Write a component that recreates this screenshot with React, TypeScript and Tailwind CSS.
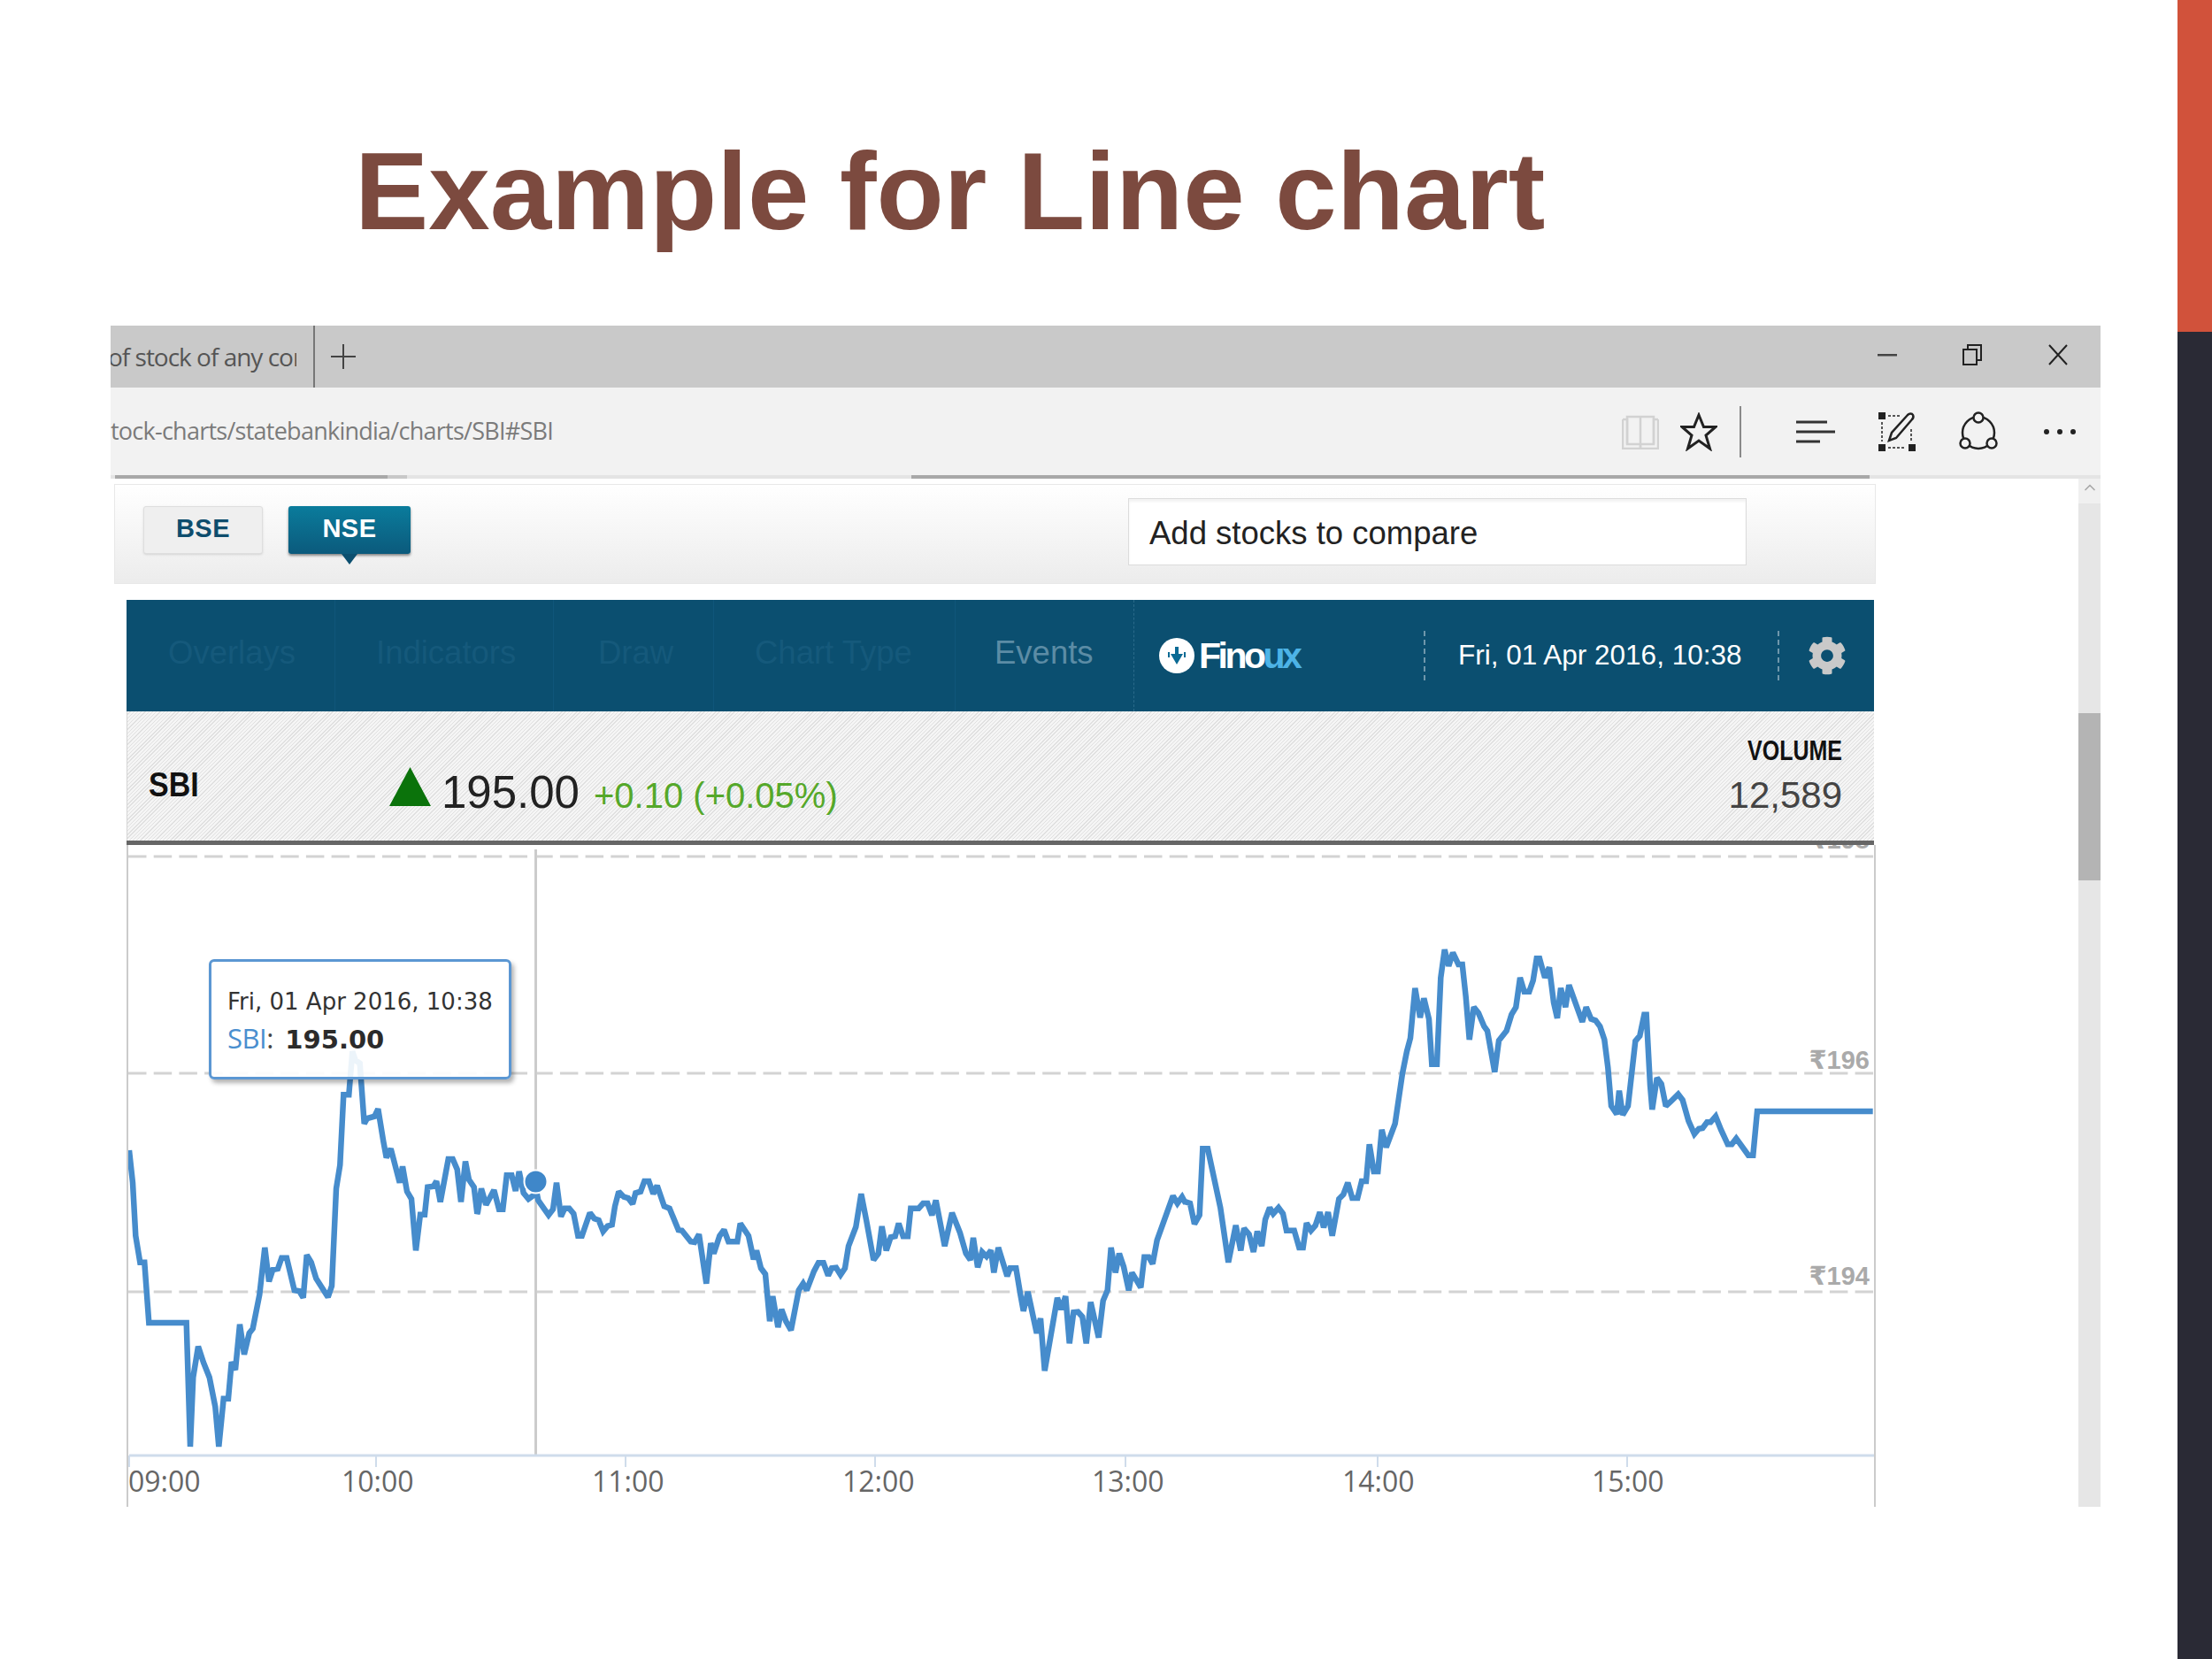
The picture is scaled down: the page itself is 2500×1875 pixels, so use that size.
import React from "react";
import { FaCog } from "react-icons/fa";
import { ChevronUp } from "lucide-react";

// price line, traced in 3x crops: [originX, originY, x, y, x, y ...]
const traced: number[][] = [
  [140, 1120, 18,540,30,650,40,830,55,920,70,920,85,1125,212,1125,225,1545,235,1310,252,1205,270,1260,290,1310,310,1410,322,1545,338,1382,354,1382,365,1258,378,1285,393,1130,408,1232,425,1160,437,1145,460,1030,478,870,492,985,505,945,522,942,535,905,552,905,578,1015,595,1018,608,1040,620,895,635,920,652,975,692,1038,705,1000,720,670,733,590,745,352,763,352,775,205,785,235,800,245,815,450,825,432,850,425,862,400,880,510,890,565,905,535,935,650,945,595,960,680,975,705,990,880,1005,758,1020,758,1030,665,1050,662,1060,645,1073,715,1100,570,1115,570,1130,605,1143,715,1158,578,1170,640,1187,665,1198,755],
  [540, 1200, 0,510,12,430,28,485,55,435,72,500,85,500,98,385,115,385,128,438,140,372,155,445,172,465,200,445,205,470,240,520,255,500,267,410,282,525,295,497,310,497,325,515,340,590,353,590,380,512,395,532,410,537,425,575,440,557,455,553,465,490,478,440,495,458,510,462,525,482,535,445,552,440,565,405,580,405,595,448,608,420,632,490,650,497,680,570,692,572,722,610,735,612,750,585,775,752,790,615,800,650,820,590,835,570,850,610,880,610,890,548,918,590,935,670,945,640,960,700,975,720,990,880,1000,795,1018,900,1030,840,1045,880,1062,910,1088,775,1103,752,1115,775,1140,710,1155,682,1172,682,1188,725,1200,700],
  [940, 1200, 0,700,15,698,30,722,45,700,57,625,82,560,100,448,118,540,142,672,158,650,170,558,185,640,200,595,215,592,227,548,242,592,258,592,268,497,295,497,310,480,325,480,340,520,353,470,383,625,408,512,435,580,455,650,470,672,480,597,495,697,510,645,525,660,540,640,550,715,565,630,595,727,605,700,625,700,640,790,650,845,665,780,695,920,708,870,722,1048,765,800,778,840,793,795,806,955,820,850,835,848,850,865,863,955,878,815,905,935,920,810,935,775,947,630,962,715,975,650,990,695,1007,775,1018,715,1048,765,1060,662,1075,662,1088,685,1103,605,1130,530,1157,455,1172,480,1188,458,1200,480],
  [1340, 1050, 0,925,15,930,30,1000,47,970,58,745,75,745,118,945,145,1130,170,1005,187,1090,198,1015,215,1035,230,1095,243,1025,258,1075,270,985,285,945,297,965,315,945,330,965,342,1022,368,1022,385,1080,398,1080,410,997,425,1022,440,1005,455,960,468,1012,483,960,497,1040,520,915,535,900,550,860,565,912,583,912,597,855,612,855,623,730,638,822,652,822,665,680,680,740,710,660,735,490,750,415,762,370,778,200,795,300,808,235,825,305,835,458,852,458,865,165,878,70,892,125,906,80,925,120,938,120,950,230,962,375,977,265,993,285,1012,330,1023,345,1048,485,1062,378,1088,345,1105,290,1120,265,1134,165,1148,212,1165,212,1178,175,1190,100,1200,100],
  [1740, 1050, 18,165,33,130,48,250,60,302,72,200,88,265,100,190,145,315,158,265,175,305,190,310,205,330,220,375,232,470,243,600,262,628,270,548,282,630,300,600,325,380,340,362,355,290,362,290,375,530,382,612,398,505,413,525,428,600,445,585,470,560,485,580,505,650,525,695,540,677,553,675,568,655,580,655,597,635,615,680,638,730,652,730,667,710,708,767,724,767,738,618,1130,618],
];

function linePoints() {
  const out: string[] = [];
  for (const seg of traced) {
    for (let i = 2; i < seg.length; i += 2) {
      out.push(`${(seg[0] + seg[i] / 3).toFixed(1)},${(seg[1] + seg[i + 1] / 3).toFixed(1)}`);
    }
  }
  return out.join(" ");
}

const gridY = [968, 1213, 1460];
const ticks = [146, 425, 707, 989, 1272, 1557, 1839];
const timeLabels: [string, number][] = [
  ["09:00", 145], ["10:00", 386], ["11:00", 669], ["12:00", 952],
  ["13:00", 1234], ["14:00", 1517], ["15:00", 1799],
];
const priceLabels: [string, number][] = [["₹198", 959], ["₹196", 1208], ["₹194", 1452]];

function LineChart() {
  return (
    <svg className="absolute inset-0" width="1977" height="748" viewBox="143 955 1977 748">
      {gridY.map((y) => (
        <line key={y} x1="145" x2="2118" y1={y} y2={y} stroke="#d3d3d3" strokeWidth="3" strokeDasharray="20.5 8.2" />
      ))}
      <line x1="605.5" x2="605.5" y1="960" y2="1645" stroke="#cccccc" strokeWidth="3" />
      <line x1="146" x2="2118" y1="1645" y2="1645" stroke="#cfdceb" strokeWidth="3" />
      {ticks.map((x) => (
        <line key={x} x1={x} x2={x} y1="1645" y2="1658" stroke="#cfdceb" strokeWidth="2" />
      ))}
      <polyline points={linePoints()} fill="none" stroke="#468ccc" strokeWidth="6.500" strokeLinejoin="miter" strokeMiterlimit="2" />
      <circle cx="605.5" cy="1335.500" r="13" fill="#3f87c9" stroke="#ffffff" strokeWidth="2" />
      {timeLabels.map(([t, x]) => (
        <text key={t} x={x} y="1686" fontSize="32" fill="#666666" className="font-['Open_Sans',sans-serif]">{t}</text>
      ))}
      {priceLabels.map(([t, y]) => (
        <text key={t} x="2113" y={y} textAnchor="end" fontSize="29" fontWeight="700" fill="#aaaaaa" className="font-['Liberation_Sans','DejaVu_Sans',sans-serif]">{t}</text>
      ))}
    </svg>
  );
}

function WindowControls() {
  return (
    <div className="flex h-full items-center pb-[4px]">
      <div className="flex w-[96px] justify-center">
        <svg width="22" height="4"><rect width="22" height="2.5" y="1" fill="#444" /></svg>
      </div>
      <div className="flex w-[96px] justify-center">
        <svg width="22" height="24" fill="none" stroke="#222" strokeWidth="2">
          <rect x="1" y="6" width="15" height="17" />
          <path d="M6 6V1h15v17h-5" />
        </svg>
      </div>
      <div className="flex w-[97px] justify-center">
        <svg width="22" height="24" fill="none" stroke="#222" strokeWidth="2">
          <path d="M1 1l20 22M21 1L1 23" />
        </svg>
      </div>
    </div>
  );
}

function Toolbar() {
  return (
    <div className="flex items-center">
      <div className="flex w-[66px] justify-center">
        <svg width="42" height="40" fill="none" stroke="#d2d2d2" strokeWidth="2.5">
          <path d="M1 6h5v28h15l0 4M41 6h-5v28H21" />
          <path d="M6 34V3h15v35M36 34V3H21" />
          <path d="M1 6v33h40V6" />
        </svg>
      </div>
      <div className="flex w-[66px] justify-center">
        <svg width="42" height="44" viewBox="0 0 42 44" fill="none" stroke="#222" strokeWidth="3">
          <path d="M21 3l5.5 13.5H40L29 26l4.5 15L21 32 8.500 41 13 26 2 16.500h13.500z" />
        </svg>
      </div>
      <div className="flex w-[28px] justify-center">
        <div className="h-[58px] w-[2px] bg-[#8a8a8a]" />
      </div>
      <div className="ml-[25px] flex w-[92px] justify-center">
        <svg width="44" height="28" fill="none" stroke="#333" strokeWidth="3">
          <path d="M0 3h35M0 14h44M0 25h27" />
        </svg>
      </div>
      <div className="flex w-[92px] justify-center">
        <svg width="42" height="44" viewBox="0 0 42 44">
          <g fill="#222">
            <rect x="0" y="0" width="8" height="8" />
            <rect x="0" y="36" width="8" height="8" />
            <rect x="34" y="36" width="8" height="8" />
          </g>
          <path d="M11 4h13M4 11v22M11 40h20M37 19v14" fill="none" stroke="#555" strokeWidth="2" strokeDasharray="3 2" />
          <path d="M12 32l3-9L33 3c2-2 5-2 6 0s1 3-1 5L20 29z" fill="none" stroke="#222" strokeWidth="2.500" />
        </svg>
      </div>
      <div className="flex w-[92px] justify-center">
        <svg width="44" height="46" fill="none" stroke="#222" strokeWidth="2.500">
          <circle cx="22" cy="24" r="18" />
          <circle cx="22" cy="7" r="5.500" fill="#f2f2f2" />
          <circle cx="7" cy="36" r="5.500" fill="#f2f2f2" />
          <circle cx="37" cy="36" r="5.500" fill="#f2f2f2" />
        </svg>
      </div>
      <div className="flex w-[92px] justify-center">
        <svg width="38" height="8" fill="#222">
          <circle cx="4" cy="4" r="3" />
          <circle cx="19" cy="4" r="3" />
          <circle cx="34" cy="4" r="3" />
        </svg>
      </div>
    </div>
  );
}

function StockHeader() {
  return (
    <div className="flex h-[126px] w-[1975px] bg-[#0b4f70] text-[36.500px] leading-none text-[#15597b]">
      <div className="flex w-[236px] items-center border-r border-[#10567a] pb-[6px] pl-[47px]">Overlays</div>
      <div className="flex w-[247px] items-center border-r border-[#10567a] pb-[6px] pl-[46px]">Indicators</div>
      <div className="flex w-[181px] items-center border-r border-[#10567a] pb-[6px] pl-[50px]">Draw</div>
      <div className="flex w-[273px] items-center border-r border-[#10567a] pb-[6px] pl-[46px]">Chart Type</div>
      <div className="flex w-[202px] items-center border-r border-dashed border-[#2a6a8a] pb-[6px] pl-[44px] text-[#5c8ca5]">Events</div>
      <div className="flex w-[327px] items-center pl-[28px]">
        <div className="flex size-[40px] items-center justify-center rounded-full bg-white">
          <svg width="22" height="24" fill="#0b6a94">
            <path d="M9 2h4v8h5l-7 12-7-12h5z" />
            <path d="M1 8h2v6H1zM19 8h2v6h-2z" />
          </svg>
        </div>
        <span className="ml-[5px] text-[41px] font-bold tracking-[-3.500px] text-white">
          Fino<span className="text-[#4db3e6]">ux</span>
        </span>
      </div>
      <div className="flex h-[56px] w-[400px] items-center self-center border-l-2 border-dashed border-[#6f97ab] pl-[37px] text-[31.500px] text-white">
        Fri, 01 Apr 2016, 10:38
      </div>
      <div className="flex h-[56px] flex-1 items-center self-center border-l-2 border-dashed border-[#6f97ab] pl-[32px]">
        <FaCog className="size-[44px] text-[#c9c9c9]" />
      </div>
    </div>
  );
}

function QuoteRow() {
  return (
    <div className="flex h-[146px] w-[1975px] border-l border-[#d5d5d5] bg-[repeating-linear-gradient(135deg,#f5f5f5_0,#f5f5f5_2px,#e0e0e0_2px,#e0e0e0_3px)] pl-[24px] pr-[36px] leading-none">
      <div className="mt-[64px] w-[272px] origin-top scale-y-[1.12] text-[34px] font-bold text-[#111]">SBI</div>
      <svg className="mt-[63px]" width="47" height="44">
        <polygon points="23.500,0 47,44 0,44" fill="#0b730b" />
      </svg>
      <div className="ml-[12px] mt-[66px] text-[51px] text-[#222]">195.00</div>
      <div className="ml-[16px] mt-[75px] text-[40px] text-[#55a82a]">+0.10 (+0.05%)</div>
      <div className="ml-auto mt-[29px] flex flex-col items-end">
        <div className="origin-top scale-y-[1.25] text-[25px] font-bold text-[#111]">VOLUME</div>
        <div className="mt-[20px] text-[42px] text-[#444]">12,589</div>
      </div>
    </div>
  );
}

export default function App() {
  return (
    <div className="flex h-[1875px] w-[2500px] overflow-hidden bg-white font-['Liberation_Sans',Arial,sans-serif]">
      <div className="flex-1">
        <div className="h-[368px] pl-[401px] pt-[154px] text-[124.800px] font-bold leading-none text-[#7c4a3f]">
          Example for Line chart
        </div>

        <div className="ml-[125px] flex h-[1335px] w-[2249px] flex-col overflow-hidden">
          {/* browser tab strip */}
          <div className="flex h-[70px] shrink-0 items-center bg-[#c9c9c9]">
            <div className="flex h-full w-[231px] items-center overflow-hidden border-r-2 border-[#777] pr-[19px]">
              <div className="w-full overflow-hidden whitespace-nowrap font-['Open_Sans',sans-serif] text-[28px] tracking-[-1px] text-[#555]">
                <span className="-ml-[3px] inline-block">of stock of any company</span>
              </div>
            </div>
            <svg className="ml-[18px]" width="28" height="28" stroke="#444" strokeWidth="2">
              <path d="M14 0v28M0 14h28" />
            </svg>
            <div className="ml-auto h-full">
              <WindowControls />
            </div>
          </div>

          {/* address bar */}
          <div className="flex h-[99px] shrink-0 items-center justify-between bg-[#f2f2f2]">
            <div className="font-['Open_Sans',sans-serif] text-[27px] tracking-[-0.750px] text-[#7b7b7b]">
              tock-charts/statebankindia/charts/SBI#SBI
            </div>
            <Toolbar />
          </div>

          <div className="flex h-[4px] shrink-0 bg-[#e4e4e4]">
            <div className="ml-[5px] w-[308px] bg-[#a8a8a8]" />
            <div className="w-[22px] bg-[#c8c8c8]" />
            <div className="ml-[570px] w-[1083px] bg-[#a8a8a8]" />
          </div>

          <div className="flex flex-1">
            <div className="w-[2224px] pl-[4px] pt-[6px]">
              <div className="flex h-[113px] w-[1991px] border border-[#e8e8e8] bg-gradient-to-b from-white to-[#ececec]">
                <div className="ml-[32px] mt-[24px] flex h-[54px] w-[135px] items-center justify-center rounded-[3px] border border-[#dedede] bg-[#efefef] pb-[2px] text-[29px] font-bold tracking-[0.5px] text-[#0e4d6d] shadow-sm">
                  BSE
                </div>
                <div className="relative ml-[29px] mt-[24px] flex h-[54px] w-[138px] items-center justify-center rounded-[3px] bg-gradient-to-b from-[#0a7c9c] to-[#0b5a7c] pb-[2px] text-[29px] font-bold tracking-[0.5px] text-white shadow-[0_2px_3px_rgba(0,0,0,0.45)]">
                  NSE
                  <div className="absolute -bottom-[12px] left-1/2 h-0 w-0 -translate-x-1/2 border-x-[9px] border-t-[12px] border-x-transparent border-t-[#0b4f6f]" />
                </div>
                <div className="ml-[811px] mt-[15px] flex h-[76px] w-[699px] items-center border border-[#dcdcdc] bg-white pl-[23px] pt-[5px] text-[36.500px] text-[#222] shadow-[inset_0_3px_3px_rgba(0,0,0,0.05)]">
                  Add stocks to compare
                </div>
              </div>

              <div className="ml-[14px] mt-[18px]">
                <StockHeader />
                <QuoteRow />
                <div className="h-[5px] w-[1975px] bg-[#666]" />
                <div className="relative h-[748px] w-[1977px] overflow-hidden">
                  <LineChart />
                  <div className="pointer-events-none absolute inset-0 border-x-2 border-[#cbcbcb]" />
                  {/* hover tooltip */}
                  <div className="absolute left-[93px] top-[129px] h-[136px] w-[342px] rounded-[6px] border-[3px] border-[#5b97d3] bg-white/90 pl-[18px] pt-[32px] leading-none shadow-[3px_4px_5px_rgba(0,0,0,0.3)]">
                    <div className="font-['DejaVu_Sans',sans-serif] text-[26px] text-[#333]">Fri, 01 Apr 2016, 10:38</div>
                    <div className="mt-[13px] flex items-baseline">
                      <span className="font-['Open_Sans',sans-serif] text-[31px] tracking-[-0.5px] text-[#4a8fcf]">SBI</span>
                      <span className="font-['Open_Sans',sans-serif] text-[31px] text-[#444]">:</span>
                      <span className="ml-[13px] font-['DejaVu_Sans',sans-serif] text-[29px] font-bold text-[#2b2b2b]">195.00</span>
                    </div>
                  </div>
                </div>
              </div>
            </div>

            {/* page scrollbar */}
            <div className="w-[25px] bg-[#e6e6e6]">
              <div className="flex h-[28px] items-start justify-center bg-[#f0f0f0]">
                <ChevronUp className="size-[20px] text-[#a8a8a8]" />
              </div>
              <div className="mt-[237px] h-[189px] bg-[#b4b4b4]" />
            </div>
          </div>
        </div>
      </div>

      <div className="flex w-[39px] flex-col">
        <div className="h-[375px] bg-[#d1523b]" />
        <div className="flex-1 bg-[#2a2a35]" />
      </div>
    </div>
  );
}
